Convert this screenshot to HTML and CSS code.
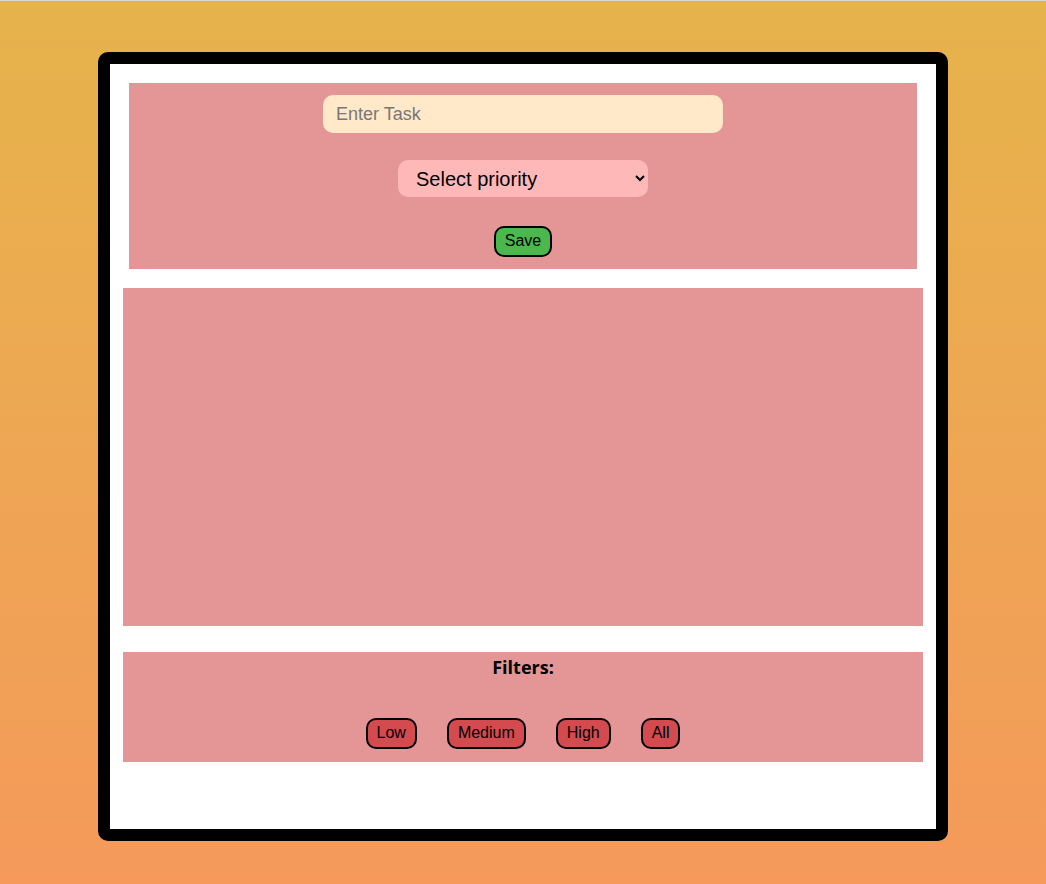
FILE: index.html
```html
<!DOCTYPE html>
<html>
<head>
<meta charset="utf-8">
<link rel="stylesheet" href="styles.css">
</head>
<body>
<div class="card">
  <div class="form">
    <input class="task" type="text" placeholder="Enter Task">
    <select class="priority">
      <option>Select priority</option>
      <option>Low</option>
      <option>Medium</option>
      <option>High</option>
    </select>
    <button class="save">Save</button>
  </div>
  <div class="list"></div>
  <div class="filters">
    <h3 class="filters-title">Filters:</h3>
    <div class="filter-row">
      <button class="fbtn">Low</button>
      <button class="fbtn">Medium</button>
      <button class="fbtn">High</button>
      <button class="fbtn">All</button>
    </div>
  </div>
</div>
</body>
</html>
```
FILE: styles.css
```css
html, body {
  margin: 0;
  padding: 0;
}
body {
  min-height: 884px;
  background: linear-gradient(to bottom, #e6b34b 0%, #f59a5b 100%);
  border-top: 1px solid #d8d8d8;
  box-sizing: border-box;
  font-family: "Liberation Sans", Arial, sans-serif;
  padding-top: 51px;
}
.card {
  width: 850px;
  height: 789px;
  margin: 0 auto;
  box-sizing: border-box;
  background: #fff;
  border: 12px solid #000;
  border-radius: 10px;
  padding-top: 19px;
  display: flex;
  flex-direction: column;
  align-items: center;
}
.form {
  width: 788px;
  height: 186px;
  box-sizing: border-box;
  background: #e49696;
  padding-top: 12px;
  display: flex;
  flex-direction: column;
  align-items: center;
}
.task {
  width: 400px;
  height: 38px;
  box-sizing: border-box;
  border: none;
  outline: none;
  border-radius: 10px;
  background: #ffe9c9;
  padding: 0 13px;
  font-family: "Liberation Sans", Arial, sans-serif;
  font-size: 18px;
  color: #333;
}
.task::placeholder {
  color: #777;
}
.priority {
  margin-top: 27px;
  width: 250px;
  height: 37px;
  box-sizing: border-box;
  border: none;
  outline: none;
  border-radius: 10px;
  background: #ffb8b8;
  padding: 0 14px;
  font-family: "Liberation Sans", Arial, sans-serif;
  font-size: 20px;
  color: #000;
}
.save {
  margin-top: 29px;
  width: 58px;
  height: 31px;
  box-sizing: border-box;
  background: #4ab84c;
  border: 2px solid #000;
  border-radius: 10px;
  font-family: "Liberation Sans", Arial, sans-serif;
  font-size: 16px;
  line-height: 25px;
  color: #000;
  padding: 0 0 2px 0;
}
.list {
  margin-top: 19px;
  width: 800px;
  height: 338px;
  background: #e49696;
}
.filters {
  margin-top: 26px;
  width: 800px;
  height: 110px;
  box-sizing: border-box;
  background: #e49696;
  display: flex;
  flex-direction: column;
  align-items: center;
}
.filters-title {
  margin: 4px 0 0 0;
  font-family: "Open Sans", "Noto Sans", sans-serif;
  font-size: 18px;
  font-weight: 700;
  line-height: 22px;
  color: #000;
}
.filter-row {
  margin-top: 40px;
  display: flex;
  gap: 30px;
}
.fbtn {
  height: 31px;
  box-sizing: border-box;
  background: #d34b4e;
  border: 2px solid #000;
  border-radius: 10px;
  padding: 0 9px 1px 9px;
  font-family: "Liberation Sans", Arial, sans-serif;
  font-size: 16px;
  color: #000;
}
```
